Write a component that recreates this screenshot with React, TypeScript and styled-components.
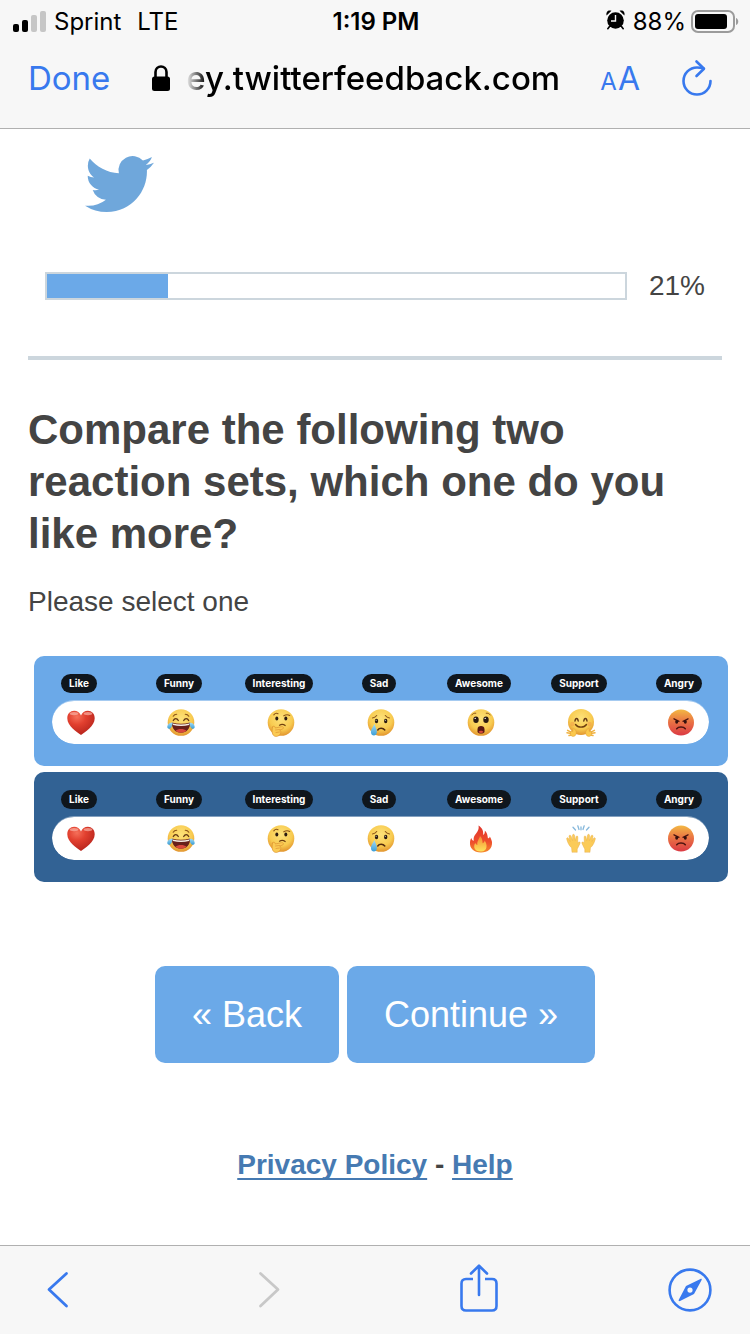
import React, { useState } from "react";
import styled, { createGlobalStyle } from "styled-components";

const blue = "#3879ee";
const brand = "#6ba9e8";
const brandDark = "#326294";
const system = `Inter, "Liberation Sans", sans-serif`;
const helvetica = `"Liberation Sans", Arial, sans-serif`;

const GlobalStyle = createGlobalStyle`
  *, *::before, *::after { box-sizing: border-box; }
  body { margin: 0; background: #fff; }
  button { border: 0; padding: 0; background: none; font: inherit; color: inherit; cursor: pointer; }
  svg { display: block; flex: none; overflow: visible; }
`;

const Page = styled.div`
  display: flex;
  flex-direction: column;
  min-height: 100vh;
  color: #444;
  font-family: ${helvetica};
`;

const Header = styled.header`
  background: #f7f7f7;
  border-bottom: 1px solid #b0b0b0;
  color: #000;
  font-family: ${system};
  padding-bottom: 14px;
`;

const StatusBar = styled.div`
  display: grid;
  grid-template-columns: 1fr auto 1fr;
  align-items: center;
  height: 42px;
  padding: 0 11px 0 13px;
  font-size: 24px;
`;

const StatusGroup = styled.div<{ $end?: boolean }>`
  display: flex;
  align-items: center;
  justify-content: ${(p) => (p.$end ? "flex-end" : "flex-start")};
  gap: ${(p) => (p.$end ? 5 : 8)}px;
`;

const Network = styled.span`
  margin-left: 8px;
`;

const Clock = styled.time`
  font-weight: 600;
`;

const Nav = styled.nav`
  display: flex;
  align-items: center;
  height: 72px;
  padding: 0 38px 0 28px;
  font-size: 33px;
`;

const NavButton = styled.button`
  color: ${blue};
`;

const Address = styled.div`
  display: flex;
  flex: 1;
  align-items: center;
  gap: 16px;
  min-width: 0;
  padding: 0 30px 0 42px;
`;

const Url = styled.span`
  flex: 1;
  font-weight: 500;
  white-space: nowrap;
  mask-image: linear-gradient(to right, transparent, #000 20px);
`;

const TextSize = styled(NavButton)`
  display: flex;
  align-items: baseline;
  gap: 1px;
  margin-right: 42px;
  font-size: 32px;
`;

const SmallLetter = styled.span`
  font-size: 24px;
`;

const Main = styled.main`
  flex: 1;
  padding: 27px 28px 60px;
`;

const Logo = styled.div`
  padding-left: 57px;
`;

const ProgressRow = styled.div`
  display: flex;
  align-items: center;
  gap: 22px;
  height: 28px;
  margin-top: 60px;
  padding: 0 17px;
  font-size: 28px;
`;

const Track = styled.div`
  flex: 1;
  height: 28px;
  border: 2px solid #ccd6dd;
`;

const Fill = styled.div`
  height: 100%;
  background: ${brand};
`;

const Rule = styled.hr`
  height: 4px;
  margin: 56px 0 44px;
  border: 0;
  background: #ccd6dd;
`;

const Question = styled.h1`
  margin: 0;
  font-size: 42px;
  line-height: 52px;
`;

const Hint = styled.p`
  margin: 22px 0 0;
  font-size: 28px;
  line-height: 40px;
`;

const Options = styled.fieldset`
  display: flex;
  flex-direction: column;
  gap: 6px;
  min-width: 0;
  margin: 34px -6px 0 6px;
  padding: 0;
  border: 0;
`;

const Option = styled.label<{ $selected: boolean }>`
  display: block;
  height: 110px;
  padding-top: 18px;
  border-radius: 10px;
  background: ${(p) => (p.$selected ? brandDark : brand)};
  cursor: pointer;
`;

const HiddenRadio = styled.input`
  position: absolute;
  opacity: 0;
  pointer-events: none;
`;

const Names = styled.div`
  display: flex;
  justify-content: space-between;
  padding: 0 29px 0 25px;
`;

const NameSlot = styled.div`
  display: flex;
  justify-content: center;
  width: 40px;
`;

const Name = styled.span`
  flex: none;
  padding: 0 8px;
  border-radius: 10px;
  background: #0f161d;
  color: #fff;
  font: 700 10px/19px ${system};
`;

const Tray = styled.div`
  display: flex;
  align-items: center;
  justify-content: space-between;
  height: 44px;
  margin: 7px 19px 0 18px;
  padding: 0 14px 0 15px;
  border-top: 1px solid rgba(255, 255, 255, 0.4);
  border-radius: 22px;
  background: #fff;
  background-clip: padding-box;
`;

const Actions = styled.div`
  display: flex;
  justify-content: center;
  gap: 8px;
  margin-top: 84px;
`;

const ActionButton = styled.button`
  height: 97px;
  padding: 0 37px;
  border-radius: 10px;
  background: ${brand};
  color: #fff;
  font-size: 36px;
`;

const Links = styled.footer`
  margin-top: 82px;
  font-size: 28px;
  font-weight: 700;
  line-height: 40px;
  text-align: center;
`;

const Link = styled.a`
  color: #467ab2;
  text-decoration: underline;
  text-decoration-thickness: 2px;
  text-underline-offset: 4px;
  text-decoration-skip-ink: none;
`;

const Toolbar = styled.nav`
  display: flex;
  align-items: center;
  justify-content: space-between;
  height: 89px;
  padding: 0 38px 0 36px;
  border-top: 1px solid #b0b0b0;
  background: #f7f7f7;
`;

const ToolButton = styled.button`
  display: flex;
  justify-content: center;
  width: 44px;
  color: ${blue};

  &:disabled { color: #c8c8c8; }
`;

/* Emoji artwork, all on a 28 x 28 grid */

const Emoji = ({ children }: { children: React.ReactNode }) => (
  <svg width="28" height="28" viewBox="0 0 28 28" aria-hidden="true" fill="none" strokeLinecap="round">
    {children}
  </svg>
);

const Defs = () => (
  <svg width="0" height="0" aria-hidden="true">
    <defs>
      <radialGradient id="yellow" cx=".5" cy=".35" r=".65">
        <stop offset="0" stopColor="#fde27a" />
        <stop offset=".65" stopColor="#f8cb50" />
        <stop offset="1" stopColor="#e2952f" />
      </radialGradient>
      <linearGradient id="rage" x1="0" y1="0" x2="0" y2="1">
        <stop offset="0" stopColor="#f3b844" />
        <stop offset=".45" stopColor="#ea7644" />
        <stop offset="1" stopColor="#db3a44" />
      </linearGradient>
      <radialGradient id="heart" cx=".35" cy=".25" r=".8">
        <stop offset="0" stopColor="#f5705a" />
        <stop offset=".4" stopColor="#e2402f" />
        <stop offset="1" stopColor="#b3221b" />
      </radialGradient>
      <linearGradient id="flame" x1="0" y1="0" x2="0" y2="1">
        <stop offset="0" stopColor="#e0352c" />
        <stop offset=".6" stopColor="#ee4d2c" />
        <stop offset="1" stopColor="#f58a2e" />
      </linearGradient>
      <linearGradient id="core" x1="0" y1="0" x2="0" y2="1">
        <stop offset="0" stopColor="#f58a32" />
        <stop offset="1" stopColor="#fde35c" />
      </linearGradient>
      <linearGradient id="tear" x1="0" y1="0" x2="0" y2="1">
        <stop offset="0" stopColor="#a6dcf5" />
        <stop offset="1" stopColor="#3a9ed8" />
      </linearGradient>
    </defs>
  </svg>
);

const Disc = () => <circle cx="14" cy="13.5" r="13.3" fill="url(#yellow)" />;

const Heart = () => (
  <Emoji>
    <path d="M14 26C10 23 .3 17.300 .3 9.200C.3 4.600 3.400 1.800 7.100 1.800C10.300 1.800 12.800 3.500 14 6.400C15.200 3.500 17.700 1.800 20.900 1.800C24.600 1.800 27.700 4.600 27.700 9.200C27.700 17.300 18 23 14 26Z" fill="url(#heart)" />
    <ellipse cx="7" cy="4.600" rx="4.300" ry="1.700" fill="#f9b0a4" opacity=".7" />
    <ellipse cx="21" cy="4.600" rx="4.300" ry="1.700" fill="#f9b0a4" opacity=".7" />
  </Emoji>
);

const Joy = () => (
  <Emoji>
    <Disc />
    <path d="M4.800 13.500C11 15.300 17 15.300 23.200 13.500C23.200 20 19.500 23.800 14 23.800S4.800 20 4.800 13.500Z" fill="#68201b" />
    <path d="M5.600 14.400C11 15.900 17 15.900 22.400 14.400L22 15.900C17 17.300 11 17.300 6 15.900Z" fill="#f7efe6" />
    <path d="M8.500 21.800C11 19.300 17 19.300 19.500 21.800C16.500 24.300 11.500 24.300 8.500 21.800Z" fill="#d9483d" />
    <path d="M6.300 11.500C7.500 9 10 9 11.300 11.500M16.700 11.500C18 9 20.500 9 21.700 11.500" stroke="#613614" strokeWidth="1.300" />
    <path d="M6.200 7.200C7 5.800 8.300 5.200 9.700 5.200M21.800 7.200C21 5.800 19.700 5.200 18.300 5.200" stroke="#8c5518" strokeWidth="1.100" />
    <path d="M5.700 13.500C1.500 13.800 .2 16 .3 18.500C1.500 21 5 20 5.700 13.500ZM22.300 13.500C26.500 13.800 27.800 16 27.700 18.500C26.500 21 23 20 22.300 13.500Z" fill="url(#tear)" />
  </Emoji>
);

const Thinking = () => (
  <Emoji>
    <Disc />
    <ellipse cx="9.800" cy="9.500" rx="1.500" ry="2" fill="#2b1a10" />
    <ellipse cx="18.800" cy="9.500" rx="1.500" ry="2" fill="#2b1a10" />
    <path d="M6.800 5.800C8 4.300 9.700 4 11 4.700M16.800 6.800C18.500 5.700 21 5.500 22.700 6.500" stroke="#8c5518" strokeWidth="1.100" />
    <path d="M12.500 16.200C14.300 15.200 16.500 15.300 18.200 16.500" stroke="#70400f" strokeWidth="1.200" />
    <path d="M5.500 18C6.500 16.500 8.300 17.300 8.300 19L14.500 17.700C16.700 17.400 17.200 19.600 15.300 20.100L12.700 21C15 22.500 13.500 27 9.500 27.400C6 27.600 4.200 24.500 5.500 18Z" fill="#fbcb54" stroke="#dc9432" strokeWidth=".7" />
    <path d="M8.500 21L12.500 20.500M9 23.500L12.500 23" stroke="#dc9432" strokeWidth=".7" />
  </Emoji>
);

const Crying = () => (
  <Emoji>
    <Disc />
    <ellipse cx="9.500" cy="12" rx="1.700" ry="2.200" fill="#2b1a10" />
    <ellipse cx="18.700" cy="12" rx="1.700" ry="2.200" fill="#2b1a10" />
    <circle cx="9.100" cy="11.200" r=".5" fill="#fff" />
    <circle cx="18.300" cy="11.200" r=".5" fill="#fff" />
    <path d="M5.500 9C7.300 8.600 8.700 7.800 9.700 6.500M22.500 9C20.700 8.600 19.300 7.800 18.300 6.500" stroke="#8c5518" strokeWidth="1.100" />
    <path d="M10.800 21C12.300 18.600 16 18.600 17.800 21" stroke="#532a0d" strokeWidth="1.500" />
    <path d="M7.500 15C5.500 18.500 3.900 20.500 3.900 23C3.900 27.700 9.900 27.700 9.900 23C9.900 20.500 8.500 18 7.500 15Z" fill="url(#tear)" />
  </Emoji>
);

const Wow = () => (
  <Emoji>
    <Disc />
    <ellipse cx="9" cy="10.700" rx="2.700" ry="3.200" fill="#2b1a10" />
    <ellipse cx="19" cy="10.700" rx="2.700" ry="3.200" fill="#2b1a10" />
    <circle cx="8.200" cy="9.400" r=".7" fill="#fff" />
    <circle cx="18.200" cy="9.400" r=".7" fill="#fff" />
    <path d="M4.700 6C5.900 4.500 7.300 3.900 8.800 4.200M23.300 6C22.100 4.500 20.700 3.900 19.200 4.200" stroke="#8c5518" strokeWidth="1" />
    <path d="M10.500 20.500C10.500 17.800 12 17 14 17S17.500 17.800 17.500 20.500V22.500C17.500 25.200 10.500 25.200 10.500 22.500Z" fill="#571711" />
    <path d="M11.500 23C12.500 21.300 15.500 21.300 16.500 23C15 24.300 13 24.300 11.500 23Z" fill="#d94a3c" />
  </Emoji>
);

const Hug = () => (
  <Emoji>
    <circle cx="14" cy="13" r="13" fill="url(#yellow)" />
    <path d="M8 12C8.500 8.700 10.700 8.700 11.200 12M16.800 12C17.300 8.700 19.500 8.700 20 12" stroke="#613614" strokeWidth="1.400" />
    <path d="M8.500 15.500C11 19 17 19 19.500 15.500" stroke="#70400f" strokeWidth="1.400" />
    <circle cx="5.500" cy="15" r="2.200" fill="#f29a48" opacity=".5" />
    <circle cx="22.500" cy="15" r="2.200" fill="#f29a48" opacity=".5" />
    <g id="hand">
      <path d="M.6 21.300L4.500 23.300M0 23.800L4 24.600M2 26.600L5 26" stroke="#f0b343" strokeWidth="1.500" />
      <path d="M4 22.500L6 22.300L5.800 20.500C6.200 19.200 7.800 19.500 8.300 21C10 23 9.700 27.500 5.800 27.400C3.300 27.300 2.800 24 4 22.500Z" fill="#fbc84c" stroke="#e0a03a" strokeWidth=".5" />
    </g>
    <use href="#hand" transform="translate(28 0) scale(-1 1)" />
  </Emoji>
);

const Angry = () => (
  <Emoji>
    <circle cx="14" cy="13.500" r="13" fill="url(#rage)" />
    <path d="M7 9.800L12 12.300M21 9.800L16 12.300" stroke="#4d1410" strokeWidth="1.300" />
    <ellipse cx="9.700" cy="12.800" rx="1.500" ry="1.900" fill="#33100d" />
    <ellipse cx="18.300" cy="12.800" rx="1.500" ry="1.900" fill="#33100d" />
    <path d="M9.700 19.800C11.500 17.500 16.500 17.500 18.300 19.800" stroke="#4d1410" strokeWidth="1.500" />
  </Emoji>
);

const Fire = () => (
  <Emoji>
    <path d="M11.500 .5C15.800 3.300 16.500 6.500 16.200 10C17.500 9.200 18 7.500 17.800 5.800C20.500 7.800 20.500 11 21 13.500C22.200 13 22.700 12.500 22.800 11.500C23.500 13 24.500 14.300 25 17C25.500 23.500 21 27.500 14 27.500C6.500 27.500 2.500 23 3 17.500C3.100 15.500 3.500 14.500 4.300 13C4.800 14.600 5.500 15.500 6.800 15.800C6 11.500 8.500 9.500 10 7.200C11.500 5 12 3 11.500 .5Z" fill="url(#flame)" />
    <path d="M13 11C15.500 13.500 15.500 16 15.600 18.300C17 17.700 17.600 16.700 17.600 15.500C20.500 19 21 26.500 14 26.500C7 26.500 6 21.500 8.300 18C8.800 19.100 9.500 19.700 10.400 20C9.700 16 12.500 14 13 11Z" fill="url(#core)" />
  </Emoji>
);

const Hands = () => (
  <Emoji>
    <path id="raised" d="M5 27L4.600 22.800C1.800 20.500 .5 17 -.3 13.900C-.5 12.600 1 12.400 1.600 13.500L3 16.500L2 11.200C2 10 3.500 9.800 4 10.900L5.700 15.700L5.500 10.200C5.700 9 7.200 9 7.500 10.200L8.300 15.700L9.100 11.700C9.500 10.500 10.800 10.800 10.800 12L10.700 18C12 16.500 13.700 16.800 13 18.500C11.500 21.500 11 22.800 10.200 24L10.200 27Z" fill="#fbcb58" stroke="#e8ae48" strokeWidth=".5" />
    <use href="#raised" transform="translate(28 0) scale(-1 1)" />
    <path d="M6 2.300L8.500 5M10.800 .8L12 4.500M17.200 .8L16 4.500M22 2.300L19.500 5M14 2V4.800" stroke="#86b8dc" strokeWidth="1.300" />
  </Emoji>
);

type Reaction = { name: string; Art: () => React.ReactElement };

const base: Reaction[] = [
  { name: "Like", Art: Heart },
  { name: "Funny", Art: Joy },
  { name: "Interesting", Art: Thinking },
  { name: "Sad", Art: Crying },
];

const sets: Reaction[][] = [
  [...base, { name: "Awesome", Art: Wow }, { name: "Support", Art: Hug }, { name: "Angry", Art: Angry }],
  [...base, { name: "Awesome", Art: Fire }, { name: "Support", Art: Hands }, { name: "Angry", Art: Angry }],
];

const SignalIcon = () => (
  <svg width="33" height="21" viewBox="0 0 33 21" aria-hidden="true">
    <rect x="0" y="13" width="6" height="8" rx="2" />
    <rect x="9" y="9" width="6" height="12" rx="2" />
    <rect x="18" y="4" width="6" height="17" rx="2" fill="#c6c6c6" />
    <rect x="27" y="0" width="6" height="21" rx="2" fill="#c6c6c6" />
  </svg>
);

const AlarmIcon = () => (
  <svg width="22" height="22" viewBox="0 0 22 22" aria-hidden="true">
    <circle cx="9.500" cy="10.500" r="8.300" />
    <path d="M.6 5.500C-.3 2 2 -.3 5.500 .8ZM18.400 5.500C19.300 2 17 -.3 13.500 .8Z" />
    <path d="M3.500 16.500L1.800 18.700M15.500 16.500L17.200 18.700" stroke="#000" strokeWidth="1.600" strokeLinecap="round" />
    <path d="M9.500 5V11H5" fill="none" stroke="#f7f7f7" strokeWidth="1.400" />
  </svg>
);

const BatteryIcon = () => (
  <svg width="48" height="23" viewBox="0 0 48 23" aria-hidden="true">
    <rect x="1" y="1" width="42" height="21" rx="6" fill="none" stroke="#9b9b9b" strokeWidth="2" />
    <rect x="4" y="4" width="32" height="15" rx="3" />
    <path d="M45 8C48 9 48 14 45 15Z" fill="#9b9b9b" />
  </svg>
);

const LockIcon = () => (
  <svg width="18" height="26" viewBox="0 0 18 26" aria-hidden="true">
    <rect x="0" y="11.500" width="18" height="14.500" rx="2.500" />
    <path d="M3.500 12V7C3.500 -.3 14.500 -.3 14.500 7V12" fill="none" stroke="#000" strokeWidth="2.600" />
  </svg>
);

const ReloadIcon = () => (
  <svg width="30" height="36" viewBox="0 0 30 36" aria-hidden="true" fill="none" stroke="currentColor" strokeWidth="2.600" strokeLinecap="round" strokeLinejoin="round">
    <path d="M28.500 21A13.500 13.500 0 1 1 15 7.500C17.500 7.500 19.500 7.900 21.500 8.500" />
    <path d="M14.500 1.500L22 8.700L14.500 16" />
  </svg>
);

const TwitterLogo = () => (
  <svg width="69" height="56" viewBox="0 2.250 24 19.500" fill="#6fa7db" role="img" aria-label="Twitter">
    <path d="M23.953 4.570a10 10 0 01-2.825.775 4.958 4.958 0 002.163-2.723c-.951.555-2.005.959-3.127 1.184a4.920 4.920 0 00-8.384 4.482C7.690 8.095 4.067 6.130 1.640 3.162a4.822 4.822 0 00-.666 2.475c0 1.710.870 3.213 2.188 4.096a4.904 4.904 0 01-2.228-.616v.060a4.923 4.923 0 003.946 4.827 4.996 4.996 0 01-2.212.085 4.936 4.936 0 004.604 3.417 9.867 9.867 0 01-6.102 2.105c-.390 0-.779-.023-1.170-.067a13.995 13.995 0 007.557 2.209c9.053 0 13.998-7.496 13.998-13.985 0-.210 0-.420-.015-.630A9.935 9.935 0 0024 4.590z" />
  </svg>
);

const Chevron = ({ forward = false }: { forward?: boolean }) => (
  <svg width="22" height="36" viewBox="0 0 22 36" aria-hidden="true" fill="none" stroke="currentColor" strokeWidth="2.800" strokeLinecap="round" strokeLinejoin="round">
    <path d={forward ? "M2.500 1.500L20 17.500L2.500 34" : "M19.500 1.500L2 17.500L19.500 34"} />
  </svg>
);

const ShareIcon = () => (
  <svg width="38" height="52" viewBox="0 0 38 52" aria-hidden="true" fill="none" stroke="currentColor" strokeWidth="2.600" strokeLinecap="round" strokeLinejoin="round">
    <path d="M13 15H6C3 15 1.500 16.500 1.500 19.500V42C1.500 45 3 46.500 6 46.500H32C35 46.500 36.500 45 36.500 42V19.500C36.500 16.500 35 15 32 15H25" strokeLinecap="butt" />
    <path d="M19 31V2M11 9.500L19 1.700L27 9.500" />
  </svg>
);

const CompassIcon = () => (
  <svg width="44" height="44" viewBox="0 0 44 44" aria-hidden="true">
    <circle cx="22" cy="22" r="20.400" fill="none" stroke="currentColor" strokeWidth="2.600" />
    <path fill="currentColor" fillRule="evenodd" d="M32.500 11C33.500 10.500 34.200 11.200 33.500 12.200L26 26L12 33C11 33.500 10.300 32.800 10.800 31.800L18 18ZM22 19.500A2.600 2.600 0 1 0 22 24.700A2.600 2.600 0 1 0 22 19.500Z" />
  </svg>
);

export default function App() {
  const [selected, setSelected] = useState(1);
  const progress = 21;

  return (
    <Page>
      <GlobalStyle />
      <Header>
        <StatusBar>
          <StatusGroup>
            <SignalIcon />
            <span>Sprint</span>
            <Network>LTE</Network>
          </StatusGroup>
          <Clock>1:19 PM</Clock>
          <StatusGroup $end>
            <AlarmIcon />
            <span>88%</span>
            <BatteryIcon />
          </StatusGroup>
        </StatusBar>
        <Nav aria-label="Browser">
          <NavButton>Done</NavButton>
          <Address>
            <LockIcon />
            <Url>ey.twitterfeedback.com</Url>
          </Address>
          <TextSize aria-label="Text size">
            <SmallLetter>A</SmallLetter>
            <span>A</span>
          </TextSize>
          <NavButton aria-label="Reload">
            <ReloadIcon />
          </NavButton>
        </Nav>
      </Header>

      <Main>
        <Logo>
          <TwitterLogo />
        </Logo>
        <ProgressRow>
          <Track role="progressbar" aria-label="Survey progress" aria-valuenow={progress} aria-valuemin={0} aria-valuemax={100}>
            <Fill style={{ width: `${progress}%` }} />
          </Track>
          <span>{progress}%</span>
        </ProgressRow>
        <Rule />
        <Question id="question">Compare the following two reaction sets, which one do you like more?</Question>
        <Hint>Please select one</Hint>
        <Defs />
        <Options aria-labelledby="question">
          {sets.map((set, i) => (
            <Option key={i} $selected={selected === i}>
              <HiddenRadio type="radio" name="reactions" checked={selected === i} onChange={() => setSelected(i)} />
              <Names>
                {set.map(({ name }) => (
                  <NameSlot key={name}>
                    <Name>{name}</Name>
                  </NameSlot>
                ))}
              </Names>
              <Tray>
                {set.map(({ name, Art }) => (
                  <Art key={name} />
                ))}
              </Tray>
            </Option>
          ))}
        </Options>
        <Actions>
          <ActionButton>« Back</ActionButton>
          <ActionButton>Continue »</ActionButton>
        </Actions>
        <Links>
          <Link href="#privacy">Privacy Policy</Link> - <Link href="#help">Help</Link>
        </Links>
      </Main>

      <Toolbar aria-label="Page controls">
        <ToolButton aria-label="Back">
          <Chevron />
        </ToolButton>
        <ToolButton aria-label="Forward" disabled>
          <Chevron forward />
        </ToolButton>
        <ToolButton aria-label="Share">
          <ShareIcon />
        </ToolButton>
        <ToolButton aria-label="Open in Safari">
          <CompassIcon />
        </ToolButton>
      </Toolbar>
    </Page>
  );
}
